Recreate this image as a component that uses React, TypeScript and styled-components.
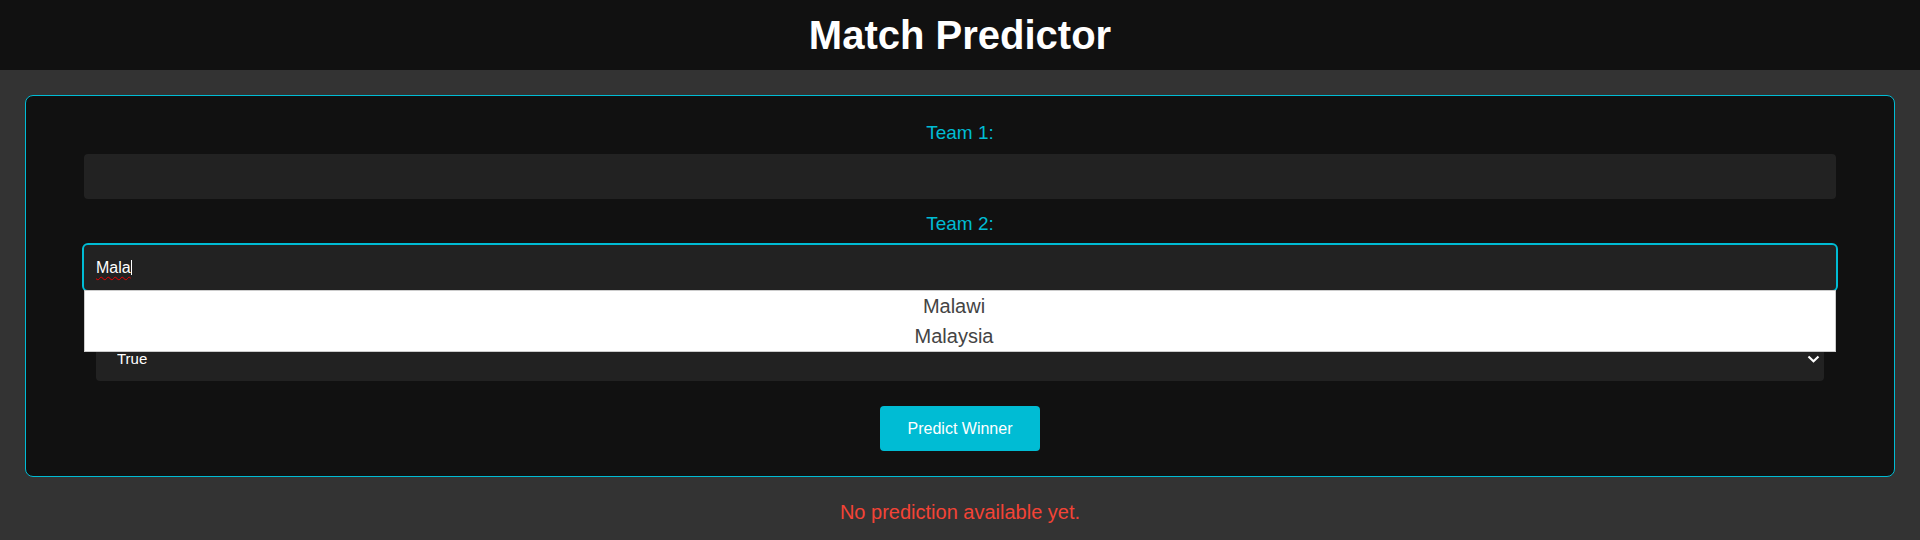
import React, { useState } from "react";
import styled, { createGlobalStyle } from "styled-components";

const GlobalStyle = createGlobalStyle`
  body {
    margin: 0;
    background-color: #333;
    font-family: "Liberation Sans", Arial, sans-serif;
  }
`;

const Header = styled.header`
  height: 70px;
  background-color: #111;
  display: flex;
  align-items: center;
  justify-content: center;
`;

const Title = styled.h1`
  margin: 0;
  font-size: 40px;
  font-weight: 700;
  color: #fff;
`;

const Main = styled.main`
  padding: 25px 25px 0;
`;

const Card = styled.form`
  display: flex;
  flex-direction: column;
  padding: 25px 58px;
  background-color: #111;
  border: 1px solid #00bcd4;
  border-radius: 8px;
`;

const Group = styled.div`
  position: relative;
  margin-bottom: 13px;
`;

const Label = styled.label`
  display: block;
  text-align: center;
  color: #00bcd4;
  font-size: 19px;
  line-height: 23px;
  margin-bottom: 10px;
`;

const Field = styled.div<{ $active?: boolean }>`
  position: relative;
  display: flex;
  align-items: center;
  height: 45px;
  box-sizing: border-box;
  padding: 0 12px;
  background-color: #222;
  border-radius: 4px;
  color: #fff;
  font-size: 16px;
  outline: ${(p) => (p.$active ? "2px solid #00bcd4" : "none")};
`;

const Typed = styled.span`
  text-decoration: underline wavy #e00;
  text-decoration-thickness: 1px;
  text-underline-offset: 3px;
`;

const Caret = styled.span`
  display: inline-block;
  width: 1px;
  height: 15px;
  background-color: #fff;
`;

const Suggestions = styled.ul`
  position: absolute;
  top: 100%;
  left: 0;
  right: 0;
  z-index: 5;
  margin: 0;
  padding: 0 12px 0 0;
  list-style: none;
  background-color: #fff;
  border: 1px solid #ccc;
`;

const Suggestion = styled.li`
  height: 30px;
  line-height: 30px;
  text-align: center;
  color: #444;
  font-size: 20px;
  cursor: pointer;
`;

const SelectWrap = styled.div`
  position: relative;
  margin: 0 12px;
`;

const Select = styled.select`
  appearance: none;
  width: 100%;
  height: 45px;
  padding: 0 30px 0 21px;
  background-color: #222;
  color: #fff;
  border: none;
  border-radius: 4px;
  font-family: inherit;
  font-size: 15px;
`;

const Chevron = styled.svg`
  position: absolute;
  right: 4px;
  top: 19px;
  pointer-events: none;
`;

const PredictButton = styled.button`
  align-self: center;
  width: 160px;
  height: 45px;
  margin-top: 12px;
  background-color: #00bcd4;
  color: #fff;
  border: 0;
  border-radius: 4px;
  font-family: inherit;
  font-size: 16px;
  cursor: pointer;
`;

const Result = styled.p`
  margin: 24px 0 0;
  text-align: center;
  color: #f44336;
  font-size: 20px;
  line-height: 23px;
`;

export default function App() {
  const [team2] = useState("Mala");
  const [neutral, setNeutral] = useState("True");
  const matches = ["Malawi", "Malaysia"];

  return (
    <>
      <GlobalStyle />
      <Header>
        <Title>Match Predictor</Title>
      </Header>
      <Main>
        <Card onSubmit={(e) => e.preventDefault()}>
          <Group>
            <Label>Team 1:</Label>
            <Field />
          </Group>
          <Group>
            <Label>Team 2:</Label>
            <Field $active>
              <Typed>{team2}</Typed>
              <Caret />
              <Suggestions>
                {matches.map((m) => (
                  <Suggestion key={m}>{m}</Suggestion>
                ))}
              </Suggestions>
            </Field>
          </Group>
          <Group>
            <Label>Neutral Venue:</Label>
            <SelectWrap>
              <Select value={neutral} onChange={(e) => setNeutral(e.target.value)}>
                <option value="True">True</option>
                <option value="False">False</option>
              </Select>
              <Chevron width="13" height="8" viewBox="0 0 13 8">
                <path d="M1.5 1.5 L6.5 6.2 L11.5 1.5" fill="none" stroke="#fff" strokeWidth="2.2" />
              </Chevron>
            </SelectWrap>
          </Group>
          <PredictButton type="submit">Predict Winner</PredictButton>
        </Card>
        <Result>No prediction available yet.</Result>
      </Main>
    </>
  );
}
